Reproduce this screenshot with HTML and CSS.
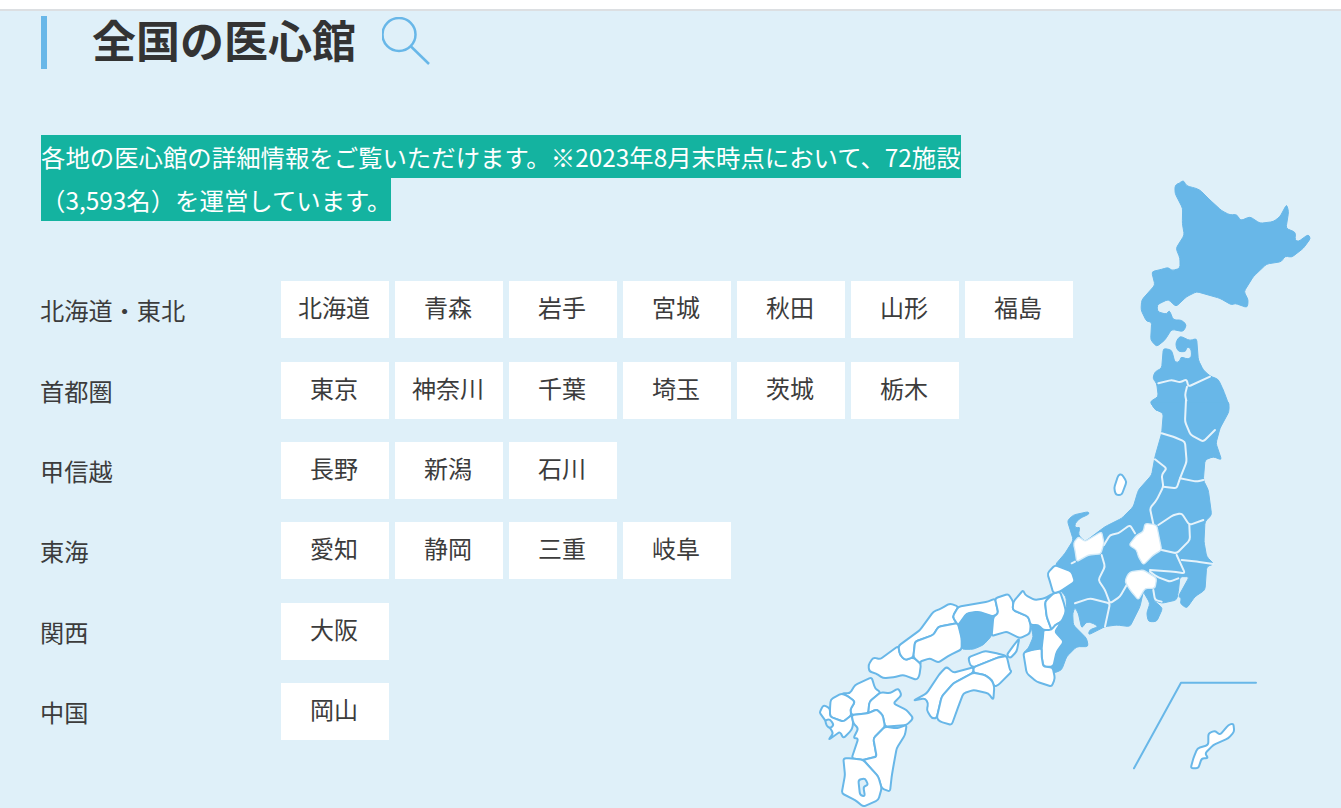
FILE: index.html
```html
<!DOCTYPE html>
<html lang="ja">
<head>
    <meta charset="UTF-8">
    <meta name="viewport" content="width=device-width, initial-scale=1.0">
    <title>全国の医心館</title>
    <link rel="stylesheet" href="styles.css">
</head>
<body>
    <div class="topbar"></div>
    <section class="clinics">
        <h2 class="title">
            <span class="title-text">全国の医心館</span>
            <svg class="search-icon" width="48" height="50" viewBox="382 18 48 50">
                <circle cx="399" cy="35.5" r="16.5"/>
                <path d="M411 47.5L429 65"/>
            </svg>
        </h2>

        <p class="lead"><span>各地の医心館の詳細情報をご覧いただけます。※2023年8月末時点において、72施設（3,593名）を運営しています。</span></p>

        <div class="areas">
            <div class="area">
                <div class="area-name">北海道・東北</div>
                <div class="prefs">
                    <a class="pref">北海道</a><a class="pref">青森</a><a class="pref">岩手</a><a class="pref">宮城</a><a class="pref">秋田</a><a class="pref">山形</a><a class="pref">福島</a>
                </div>
            </div>
            <div class="area">
                <div class="area-name">首都圏</div>
                <div class="prefs">
                    <a class="pref">東京</a><a class="pref">神奈川</a><a class="pref">千葉</a><a class="pref">埼玉</a><a class="pref">茨城</a><a class="pref">栃木</a>
                </div>
            </div>
            <div class="area">
                <div class="area-name">甲信越</div>
                <div class="prefs">
                    <a class="pref">長野</a><a class="pref">新潟</a><a class="pref">石川</a>
                </div>
            </div>
            <div class="area">
                <div class="area-name">東海</div>
                <div class="prefs">
                    <a class="pref">愛知</a><a class="pref">静岡</a><a class="pref">三重</a><a class="pref">岐阜</a>
                </div>
            </div>
            <div class="area">
                <div class="area-name">関西</div>
                <div class="prefs">
                    <a class="pref">大阪</a>
                </div>
            </div>
            <div class="area">
                <div class="area-name">中国</div>
                <div class="prefs">
                    <a class="pref">岡山</a>
                </div>
            </div>
        </div>

        <!-- map: each group is traced at 3x from its own part of the page -->
        <svg class="japan" width="531" height="638" viewBox="810 170 531 638">
            <!-- hokkaido, aomori -->
            <g transform="translate(1040 170) scale(.3333)">
                <path class="on" d="M405 45L418 40L430 30L440 48L465 54L480 60L510 90L545 122L570 135L590 133L602 152L630 140L660 160L700 155L720 140L740 103L746 125L738 175L767 187L765 210L775 215L805 193L812 205L790 235L755 262L735 258L725 275L680 282L640 320L612 365L625 390L622 413L585 400L575 405L540 385L470 365L440 380L408 410L385 388L360 400L352 405L352 425L380 433L388 420L400 450L425 450L440 465L430 485L395 478L375 510L350 530L332 510L335 455L320 455L303 420L305 390L345 345L335 305L365 298L385 292L395 302L420 295L420 265L408 235L433 195L427 160L428 115L405 70Z"/>
                <path class="on" d="M408 515L420 498L450 512L470 505L475 570L490 600L510 618L535 628L550 660L565 700L567 722L350 722L345 718L330 695L355 680L350 640L338 625L345 605L365 595L370 535L395 540L405 578L420 575L422 560L445 568L455 560L453 535L440 530L438 545L415 545L408 530Z"/>
                <path class="line" d="M355 640L395 630L420 637L440 628L445 650L510 620"/>
                <path class="line" d="M441 650L435 675L441 700L437 725"/>
            </g>
            <!-- honshu -->
            <g transform="translate(1030 400) scale(.3333)">
                <path class="on" d="M360 5L597 5L597 35L570 85L558 130L575 180L550 170L525 180L520 240L535 270L545 345L525 365L522 425L530 470L552 492L530 500L525 570L495 590L470 625L450 610L455 595L445 590L478 530L450 530L445 575L440 600L395 610L370 600L398 625L380 665L355 665L350 640L360 610L340 575L330 620L300 680L260 675L225 680L175 705L178 690L205 680L190 670L170 665L155 685L145 640L135 622L128 640L130 675L170 715L175 740L140 740L110 770L95 810L70 820L68 795L80 755L102 725L75 695L95 665L110 620L108 590L85 565L135 545L125 515L75 495L105 460L130 420L112 362L130 345L175 335L178 342L150 355L135 370L135 385L150 380L145 405L165 425L205 395L225 380L275 355L310 320L325 270L365 225L375 170L395 100L400 40L375 28Z"/>
                <path class="line" d="M468 0L465 65L482 105L520 125L555 90"/>
                <path class="line" d="M395 100L430 110L465 125L470 185L450 235L440 265L400 260"/>
                <path class="line" d="M450 235L500 245L520 240"/>
                <path class="line" d="M375 178L410 205L395 225L400 260L380 300L360 325L370 372"/>
                <path class="line" d="M385 375L430 345L455 340L478 375L520 360"/>
                <path class="line" d="M478 375L480 420L440 460L395 450"/>
                <path class="line" d="M440 465L465 520L430 515L360 510"/>
                <path class="line" d="M455 480L500 485L550 492"/>
                <path class="line" d="M360 515L380 530L420 545L445 535"/>
                <path class="line" d="M370 570L375 600L395 605"/>
                <path class="line" d="M222 435L240 405L265 400L300 375L315 400"/>
                <path class="line" d="M215 465L225 500L205 540L225 570L240 610L270 590L290 555"/>
                <path class="line" d="M135 610L180 595L240 610L225 680"/>
                <path class="line" d="M125 490L135 485"/>
                <path class="off-soft" d="M345 370L380 375L395 450L370 465L340 495L325 470L320 450L297 435L320 405L340 395Z"/>
                <path class="off-soft" d="M290 530L300 515L340 510L380 535L375 565L345 565L325 600L300 570L285 545Z"/>
                <path class="off-soft" d="M130 430L145 410L165 425L215 395L222 430L212 462L175 465L140 485L135 450Z"/>
                <path class="off" d="M252 265L265 225L275 222L290 245L275 285L258 285Z"/>
            </g>
            <!-- chugoku, kinki, shikoku -->
            <g transform="translate(860 570) scale(.3333)">
                <path class="off" d="M25 285L40 262L60 268L115 228L120 255L135 270L160 262L183 282L178 318L170 330L130 315L100 322L70 325L48 310L28 305Z"/>
                <path class="off" d="M115 228L180 180L220 125L245 115L270 100L295 110L278 140L290 160L235 170L220 195L165 215L160 262L135 270L120 255Z"/>
                <path class="off" d="M295 110L385 95L405 85L415 130L400 140L355 125L320 130L295 165L290 160L278 140Z"/>
                <path class="off" d="M165 215L220 195L235 170L290 160L295 165L305 205L305 238L270 255L235 278L210 265L180 275L183 282L160 262Z"/>
                <path class="on" d="M295 165L320 130L355 125L400 140L395 198L370 225L340 238L305 238L305 205Z"/>
                <path class="off" d="M405 85L445 72L460 95L458 120L505 140L512 165L510 190L480 205L440 185L395 198L400 140L415 130Z"/>
                <path class="off" d="M460 95L490 60L495 75L525 90L555 85L580 70L555 95L560 140L575 180L550 180L535 165L512 165L505 140L458 120Z"/>
                <path class="off" d="M555 95L580 70L600 65L612 100L618 125L605 155L585 165L575 180L560 140Z"/>
                <path class="off" d="M562 10L585 -15L635 5L645 35L600 65L580 70L570 35Z"/>
                <path class="off" d="M575 180L585 165L605 155L585 185L612 215L590 245L580 290L550 290L545 260L545 235L550 190L550 180Z"/>
                <path class="off" d="M490 248L515 240L545 235L545 260L550 290L578 292L585 325L575 350L530 335L500 310Z"/>
                <path class="on" d="M512 165L535 165L550 180L550 190L545 235L515 240L490 248L505 235L520 200Z"/>
                <path class="off" d="M440 255L462 225L478 205L470 245L450 265Z"/>
                <path class="off" d="M325 262L375 243L410 250L440 258L415 262L340 292L330 285Z"/>
                <path class="off" d="M340 292L415 262L440 258L450 300L455 305L415 345L403 350L395 330L375 315L340 308Z"/>
                <path class="off" d="M160 392L200 370L240 310L260 290L280 308L340 292L340 308L280 340L245 380L230 445L215 445L200 420L205 400L195 385Z"/>
                <path class="off" d="M230 445L245 380L280 340L340 308L375 315L395 330L403 350L400 390L385 370L340 360L310 370L295 410L275 465L240 455Z"/>
            </g>
            <!-- kyushu -->
            <g transform="translate(810 660) scale(.3333)">
                <path class="off" d="M95 100L120 100L135 75L185 52L195 85L212 97L178 125L175 160L125 165L120 150L135 125L115 110Z"/>
                <path class="off" d="M60 145L62 118L95 100L115 110L135 125L120 150L125 165L100 185L60 170Z"/>
                <path class="off" d="M30 155L40 135L60 145L60 170L100 185L125 165L130 190L125 210L100 235L90 215L55 240L70 220L45 180L30 160Z"/>
                <path class="off" d="M178 125L212 97L240 100L265 85L275 105L250 130L290 150L310 175L290 195L225 200L218 165L200 148L175 160Z"/>
                <path class="off" d="M125 165L175 160L200 148L218 165L225 200L190 235L200 290L160 300L125 295L145 235L130 235L145 205L130 190Z"/>
                <path class="off" d="M225 200L260 205L290 195L285 225L260 265L250 320L245 350L240 395L215 385L205 350L160 300L200 290L190 235Z"/>
                <path class="off" d="M100 295L125 295L160 300L205 350L215 385L205 420L160 440L135 420L95 400L105 345Z"/>
                <path class="bay" d="M145 360L165 355L175 375L160 380L165 410L150 405Z"/>
                <path class="bay" d="M45 180L60 178L72 195L60 205L50 198Z"/>
            </g>
            <!-- okinawa -->
            <g transform="translate(1120 670) scale(.3333)">
                <path class="frame sharp" d="M42 295L183 38L408 38"/>
                <path class="off" d="M212 295L220 265L232 235L265 225L265 190L285 182L300 195L325 165L340 160L343 185L325 205L280 225L255 250L265 265L245 265L235 295Z"/>
            </g>
        </svg>
    </section>
    <script src="map.js"></script>
</body>
</html>
```

FILE: styles.css
```css
body {
    margin: 0;
    height: 808px;
    overflow: hidden;
    background: #dff0f9;
    color: #3c3c3c;
    font-family: "Noto Sans CJK JP", "Noto Sans", sans-serif;
    font-size: 24px;
}

.topbar {
    height: 9px;
    background: #fff;
    border-bottom: 2px solid #dcdfe2;
}

.clinics {
    position: relative;
    padding: 5px 0 0 41px;
}

.title {
    display: flex;
    align-items: center;
    gap: 26px;
    height: 53px;
    margin: 0;
    padding-left: 45px;
    border-left: 6px solid #68b7e8;
    color: #333;
    font-size: 44px;
    font-weight: 700;
    line-height: 47px;
}

.title-text {
    height: 53px;
}

.search-icon {
    margin-top: -2px;
    fill: none;
    stroke: #68b7e8;
    stroke-width: 2.5;
}

.lead {
    width: 925px;
    margin: 66px 0 60.2px;
    font-size: 24.4px;
    line-height: 43px;
}

.lead span {
    padding: 4px 0;
    background: #14b3a0;
    color: #fff;
}

.area {
    display: flex;
    margin-bottom: 23.35px;
}

.area-name {
    width: 241px;
    margin-left: -1px;
    padding-top: 7px;
    font-size: 24.2px;
    line-height: 43px;
}

.prefs {
    display: flex;
    gap: 6px;
}

.pref {
    box-sizing: border-box;
    width: 108px;
    height: 57px;
    padding-right: 2px;
    background: #fff;
    text-align: center;
    line-height: 51px;
}

.japan {
    position: absolute;
    left: 810px;
    top: 159px;
}

.japan path {
    stroke-linejoin: round;
    stroke-linecap: round;
}

.on {
    fill: #68b7e8;
    stroke: #68b7e8;
    stroke-width: 3;
}

.line {
    fill: none;
    stroke: #e6f3fb;
    stroke-width: 6;
}

.off {
    fill: #fff;
    stroke: #68b7e8;
    stroke-width: 6;
}

.off-soft {
    fill: #fff;
    stroke: #d5ebf8;
    stroke-width: 4;
}

.bay {
    fill: #dff0f9;
    stroke: #68b7e8;
    stroke-width: 6;
}

.frame {
    fill: none;
    stroke: #68b7e8;
    stroke-width: 6;
}
```

FILE: map.js
```js
// Round the corners of the traced map outlines
const RADIUS = 8;

function toward(from, to, dist) {
    const len = Math.hypot(to[0] - from[0], to[1] - from[1]);
    const t = Math.min(dist, len / 2) / len;
    return [from[0] + (to[0] - from[0]) * t, from[1] + (to[1] - from[1]) * t];
}

document.querySelectorAll('.japan path:not(.sharp)').forEach(path => {
    const d = path.getAttribute('d');
    const closed = d.endsWith('Z');
    const pts = d.match(/-?[\d.]+ -?[\d.]+/g).map(s => s.split(' ').map(Number));
    const n = pts.length;
    let out = '';

    if (closed) {
        out = 'M' + toward(pts[0], pts[1], RADIUS).join(' ');
        for (let i = 1; i <= n; i++) {
            const p = pts[i % n];
            const a = toward(p, pts[i - 1], RADIUS);
            const b = toward(p, pts[(i + 1) % n], RADIUS);
            out += 'L' + a.join(' ') + 'Q' + p.join(' ') + ' ' + b.join(' ');
        }
        out += 'Z';
    } else {
        out = 'M' + pts[0].join(' ');
        for (let i = 1; i < n - 1; i++) {
            const a = toward(pts[i], pts[i - 1], RADIUS);
            const b = toward(pts[i], pts[i + 1], RADIUS);
            out += 'L' + a.join(' ') + 'Q' + pts[i].join(' ') + ' ' + b.join(' ');
        }
        out += 'L' + pts[n - 1].join(' ');
    }
    path.setAttribute('d', out);
});
```
